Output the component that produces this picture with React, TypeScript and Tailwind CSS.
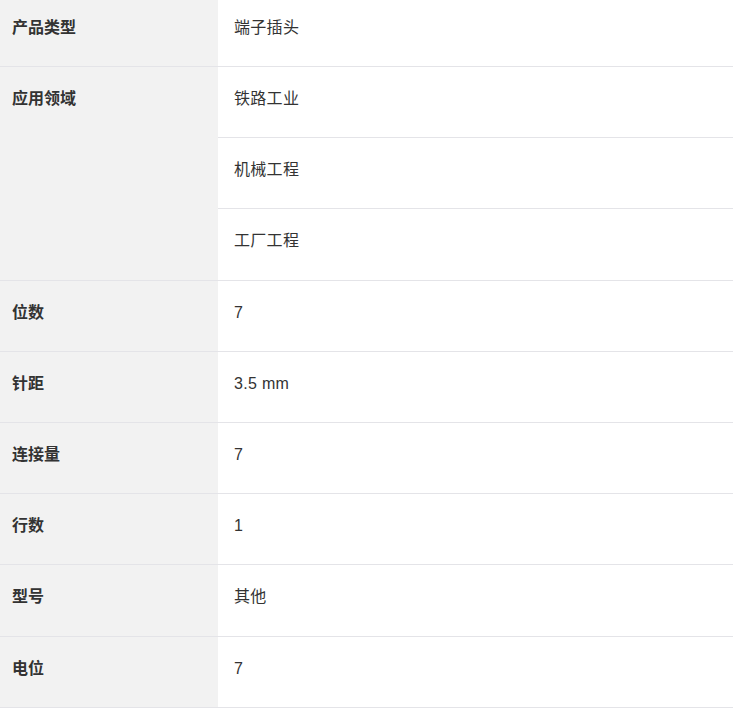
import type { JSX } from 'react';

interface SpecRow {
  label: string;
  values: string[];
}

const SPECS: SpecRow[] = [
  { label: '产品类型', values: ['端子插头'] },
  { label: '应用领域', values: ['铁路工业', '机械工程', '工厂工程'] },
  { label: '位数', values: ['7'] },
  { label: '针距', values: ['3.5 mm'] },
  { label: '连接量', values: ['7'] },
  { label: '行数', values: ['1'] },
  { label: '型号', values: ['其他'] },
  { label: '电位', values: ['7'] },
];

export default function App(): JSX.Element {
  return (
    <div
      className="w-[733px] bg-white text-[16px] text-[#333]"
      style={{ fontFamily: '"Liberation Sans", "Noto Sans CJK SC", sans-serif' }}
    >
      {SPECS.map((row, i) => (
        <div className="flex border-b border-[#e4e4e8]" key={row.label}>
          {/* label column */}
          <div
            className={
              i === 0
                ? 'w-[218px] shrink-0 bg-[#f2f2f2] pt-4 pl-3 font-bold leading-6'
                : 'w-[218px] shrink-0 bg-[#f2f2f2] pt-5 pl-3 font-bold leading-6'
            }
          >
            {row.label}
          </div>

          {/* value column */}
          <div className="flex flex-1 flex-col">
            {row.values.map((value, j) => (
              <div
                className={
                  j < row.values.length - 1
                    ? 'h-[71.2px] border-b border-[#e4e4e8] pt-5 pl-4 leading-6 tracking-[0.3px]'
                    : i === 0
                      ? 'h-[66px] pt-4 pl-4 leading-6 tracking-[0.3px]'
                      : 'h-[70.2px] pt-5 pl-4 leading-6 tracking-[0.3px]'
                }
                key={value + j}
              >
                {value}
              </div>
            ))}
          </div>
        </div>
      ))}
    </div>
  );
}
